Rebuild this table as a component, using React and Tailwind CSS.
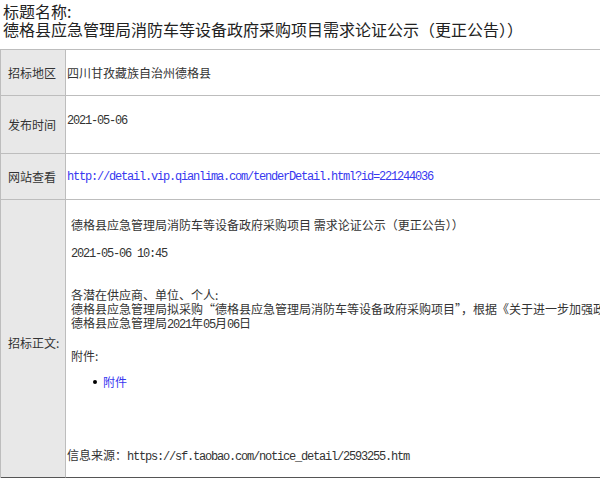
import React from 'react';

// Latin runs in the reference are half-width (6px at 12px), like SimSun
const Mono = ({ children, className = '' }) => (
  <span className={`font-['Liberation_Mono','Noto_Sans_CJK_SC',monospace] tracking-[-1.2px] ${className}`}>
    {children}
  </span>
);

const Label = ({ children, className = '' }) => (
  <div className={`bg-[#e8e8e8] border-b border-r border-[#bdbdbd] flex items-center pl-[7px] text-[12px] text-[#333] ${className}`}>
    {children}
  </div>
);

export default function App() {
  return (
    <div className="w-[600px] h-[478px] overflow-hidden bg-white font-['Noto_Sans_CJK_SC',sans-serif] text-[#222]">
      {/* Page heading */}
      <div className="pl-[3px] pt-[2px] text-[16px] leading-[18px]">
        <div>标题名称:</div>
        <div>德格县应急管理局消防车等设备政府采购项目需求论证公示（更正公告））</div>
      </div>

      {/* Detail table */}
      <div className="mt-[11px] w-[820px] grid grid-cols-[65px_1fr] border-t border-l border-[#bdbdbd] text-[12px] leading-[14px] text-[#333]">
        <Label className="h-[46px]">招标地区</Label>
        <div className="h-[46px] border-b border-[#bdbdbd] flex items-center pl-[1px]">
          四川甘孜藏族自治州德格县
        </div>

        <Label className="h-[58px]">发布时间</Label>
        <div className="h-[58px] border-b border-[#bdbdbd] pl-[1px] pt-[16px]">
          <Mono>2021-05-06</Mono>
        </div>

        <Label className="h-[46px]">网站查看</Label>
        <div className="h-[46px] border-b border-[#bdbdbd] flex items-center pl-[1px]">
          <Mono className="text-[#3838f0]">http://detail.vip.qianlima.com/tenderDetail.html?id=221244036</Mono>
        </div>

        <Label className="h-[278px] border-b-[#555] pt-[8px]">招标正文:</Label>
        <div className="h-[278px] border-b border-[#555] pl-[1px] pt-[18px] whitespace-nowrap">
          <div className="pl-[4px]">
            <div>德格县应急管理局消防车等设备政府采购项目 需求论证公示（更正公告））</div>
            <div className="mt-[13px]"><Mono>2021-05-06 10:45</Mono></div>
            <div className="mt-[27px]">各潜在供应商、单位、个人:</div>
            <div>德格县应急管理局拟采购“德格县应急管理局消防车等设备政府采购项目”，根据《关于进一步加强政府采购需求和履约验收管理的指导意见》相关规定，现将需求论证情况公示如下：</div>
            <div>德格县应急管理局<Mono>2021</Mono>年<Mono>05</Mono>月<Mono>06</Mono>日</div>
            <div className="mt-[17px]">附件:</div>
            <ul className="mt-[12px] pl-[22px]">
              <li className="flex items-center">
                <span className="w-[4px] h-[4px] rounded-full bg-black mr-[6px]"></span>
                <span className="text-[#3838f0]">附件</span>
              </li>
            </ul>
          </div>
          <div className="mt-[59px]">
            信息来源：<Mono>https://sf.taobao.com/notice_detail/2593255.htm</Mono>
          </div>
        </div>
      </div>
    </div>
  );
}
